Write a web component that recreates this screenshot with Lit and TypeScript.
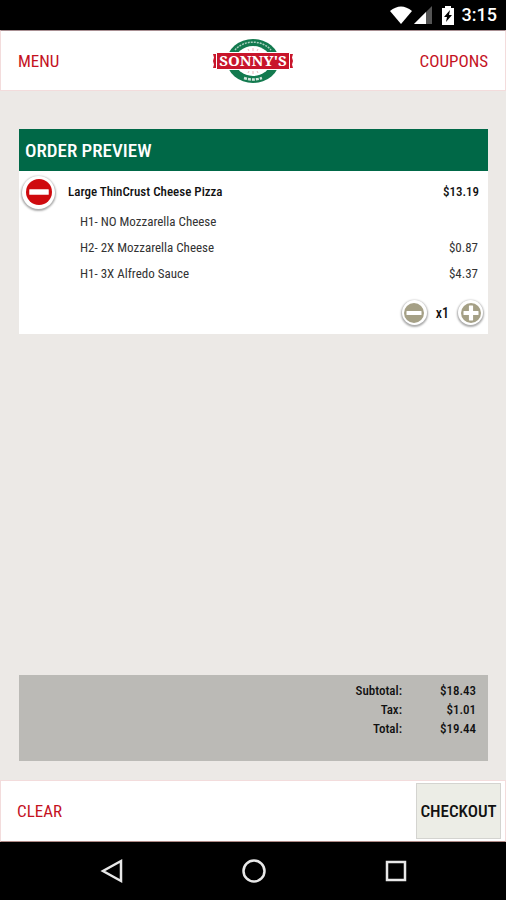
import { LitElement, html, css, svg } from "lit";
import { customElement, state } from "lit/decorators.js";

interface Extra {
  label: string;
  price: string;
}

const EXTRAS: Extra[] = [
  { label: "H1- NO Mozzarella Cheese", price: "" },
  { label: "H2- 2X Mozzarella Cheese", price: "$0.87" },
  { label: "H1- 3X Alfredo Sauce", price: "$4.37" },
];

const TOTALS: [string, string][] = [
  ["Subtotal:", "$18.43"],
  ["Tax:", "$1.01"],
  ["Total:", "$19.44"],
];

const logo = html`
  <svg class="logo" viewBox="0 0 80 48" width="80" height="48" role="img" aria-label="Sonny's">
    <ellipse cx="40" cy="24" rx="26" ry="22" fill="#137a4f" />
    <ellipse cx="40" cy="24" rx="18" ry="15" fill="#fff" />
    <path d="M22 13A22 18.500 0 0 1 58 13" fill="none" stroke="#a9cfbd" stroke-width="1.500" stroke-dasharray="2 1" />
    <path d="M31 41Q40 44 49 41" fill="none" stroke="#d3e6dc" stroke-width="2.500" stroke-dasharray="3 1" />
    <path d="M35 12l1 2M40 11v3M45 12l-1 2M35 36l1-2M40 37v-3M45 36l-1-2" stroke="#e5a3aa" stroke-width=".8" />
    <path d="M0 17h3v14H0l1-3.500L0 24l1-3.500zM80 17h-3v14h3l-1-3.500L80 24l-1-3.500z" fill="#c8152b" />
    <path d="M3.500 15.500h73v17h-73z" fill="#c8152b" stroke="#fff" stroke-width="1" />
    <text x="40" y="29" text-anchor="middle" class="logo-text">SONNY'S</text>
  </svg>
`;

const disc = (color: string, plus: boolean) => html`
  <svg class="glyph" viewBox="0 0 24 24" aria-hidden="true">
    <circle cx="12" cy="12" r="12" fill=${color} />
    <rect x="3" y="9.500" width="18" height="5" rx="0.500" fill="#fff" />
    ${plus ? svg`<rect x="9.500" y="3" width="5" height="18" rx="0.500" fill="#fff" />` : null}
  </svg>
`;

@customElement("app-root")
export class AppRoot extends LitElement {
  @state() private quantity = 1;

  static styles = css`
    :host {
      display: flex;
      flex-direction: column;
      min-height: 100vh;
      background: #ece9e6;
      color: #111;
      font-family: "Roboto Condensed", "Liberation Sans Narrow", Roboto, sans-serif;
      font-size: 13px;
      line-height: 18px;
    }
    * {
      box-sizing: border-box;
    }
    button {
      border: 0;
      padding: 0;
      background: none;
      color: inherit;
      font: inherit;
      cursor: pointer;
    }
    .status {
      display: flex;
      align-items: center;
      justify-content: flex-end;
      height: 30px;
      padding-right: 9px;
      background: #000;
      color: #fff;
      font: 500 18px/30px Roboto, sans-serif;
    }
    .status svg {
      display: block;
    }
    .battery {
      margin: 0 8px 0 9px;
    }
    .bar {
      display: grid;
      grid-template-columns: 1fr auto 1fr;
      align-items: center;
      height: 61px;
      padding: 0 17px;
      background: #fff;
      border: 1px solid #f3dcdc;
      border-top-color: #a88f92;
    }
    .link {
      justify-self: start;
      color: #c4121f;
      font-size: 17px;
      line-height: 24px;
      text-decoration: none;
    }
    .link.end {
      justify-self: end;
    }
    .logo {
      display: block;
    }
    .logo-text {
      fill: #fff;
      font: 700 15px "Noto Serif", "DejaVu Serif", serif;
    }
    main {
      flex: 1;
      display: flex;
      flex-direction: column;
      justify-content: space-between;
      padding: 38px 18px 19px 19px;
    }
    .card {
      background: #fff;
    }
    h1 {
      margin: 0;
      padding: 1px 6px 0;
      background: #006847;
      color: #fff;
      font-size: 19px;
      font-weight: 500;
      line-height: 41px;
    }
    .item {
      display: flex;
      align-items: center;
      height: 38px;
      padding: 4px 9px 0 3px;
      font-weight: 500;
    }
    .name {
      flex: 1;
      padding-left: 13px;
    }
    .round {
      display: grid;
      place-items: center;
      width: 33px;
      height: 33px;
      border-radius: 50%;
      background: #fff;
      box-shadow: 0 1px 2px 1px #0005;
    }
    .round .glyph {
      width: 26px;
      height: 26px;
    }
    .round.small {
      width: 25px;
      height: 25px;
    }
    .round.small .glyph {
      width: 20px;
      height: 20px;
    }
    .extras {
      margin: 0;
      padding: 0 10px 0 61px;
      list-style: none;
      color: #333;
    }
    .extras li {
      display: flex;
      justify-content: space-between;
      line-height: 26px;
    }
    .quantity {
      display: flex;
      align-items: center;
      justify-content: flex-end;
      gap: 9px;
      padding: 13px 5px 9px 0;
      font-size: 14px;
      font-weight: 500;
    }
    .totals {
      background: #bbbab6;
      min-height: 86px;
      padding: 6px 12px;
    }
    table {
      margin-left: auto;
      border-collapse: collapse;
      text-align: right;
    }
    th,
    td {
      padding: 0;
      font-weight: 500;
      line-height: 19px;
    }
    td {
      width: 74px;
    }
    .bar.footer {
      display: flex;
      justify-content: space-between;
      height: 62px;
      padding: 0 4px 0 16px;
      border-top-color: #f3dcdc;
      border-bottom-color: #b08a86;
    }
    .checkout {
      width: 85px;
      height: 56px;
      border: 1px solid #d4d4d0;
      background: #ecede6;
      font-size: 17px;
      font-weight: 500;
    }
    nav {
      display: flex;
      justify-content: center;
      align-items: center;
      gap: 114px;
      height: 58px;
      padding-left: 2px;
      background: #000;
    }
    nav svg {
      display: block;
      width: 28px;
      height: 28px;
      fill: none;
      stroke: #e8e8e8;
      stroke-width: 2.5;
    }
  `;

  private change(step: number) {
    this.quantity = Math.max(1, this.quantity + step);
  }

  render() {
    return html`
      <div class="status">
        <svg width="24" height="20" viewBox="0 0 24 20" aria-hidden="true">
          <path d="M1 6Q12-3 23 6L12 19z" fill="#fff" />
        </svg>
        <svg width="20" height="20" viewBox="0 0 20 20" aria-hidden="true">
          <path d="M19 1v18H1z" fill="#555" />
          <path d="M13 7v12H1z" fill="#fff" />
        </svg>
        <svg class="battery" width="12" height="20" viewBox="0 0 12 20" aria-hidden="true">
          <path d="M0 3h3V1h6v2h3v17H0z" fill="#fff" />
          <path d="M8 5l-6 7h3l-1 5 6-7H7z" fill="#000" />
        </svg>
        <span>3:15</span>
      </div>
      <header class="bar">
        <a class="link" href="#menu">MENU</a>
        ${logo}
        <a class="link end" href="#coupons">COUPONS</a>
      </header>
      <main>
        <section class="card">
          <h1>ORDER PREVIEW</h1>
          <div class="item">
            <button class="round" aria-label="Remove item">${disc("#cf0a0e", false)}</button>
            <span class="name">Large ThinCrust Cheese Pizza</span>
            <span>$13.19</span>
          </div>
          <ul class="extras">
            ${EXTRAS.map((e) => html`<li><span>${e.label}</span><span>${e.price}</span></li>`)}
          </ul>
          <div class="quantity">
            <button class="round small" aria-label="Decrease quantity" @click=${() => this.change(-1)}>
              ${disc("#a5a086", false)}
            </button>
            <output>x${this.quantity}</output>
            <button class="round small" aria-label="Increase quantity" @click=${() => this.change(1)}>
              ${disc("#a5a086", true)}
            </button>
          </div>
        </section>
        <section class="totals">
          <table>
            ${TOTALS.map(([k, v]) => html`<tr><th scope="row">${k}</th><td>${v}</td></tr>`)}
          </table>
        </section>
      </main>
      <footer class="bar footer">
        <button class="link">CLEAR</button>
        <button class="checkout">CHECKOUT</button>
      </footer>
      <nav aria-label="System">
        <button aria-label="Back">
          <svg viewBox="0 0 28 28"><path d="M23 4v20L5 14z" /></svg>
        </button>
        <button aria-label="Home">
          <svg viewBox="0 0 28 28"><circle cx="14" cy="14" r="10.500" /></svg>
        </button>
        <button aria-label="Recent apps">
          <svg viewBox="0 0 28 28"><rect x="5" y="5" width="18" height="18" /></svg>
        </button>
      </nav>
    `;
  }
}
